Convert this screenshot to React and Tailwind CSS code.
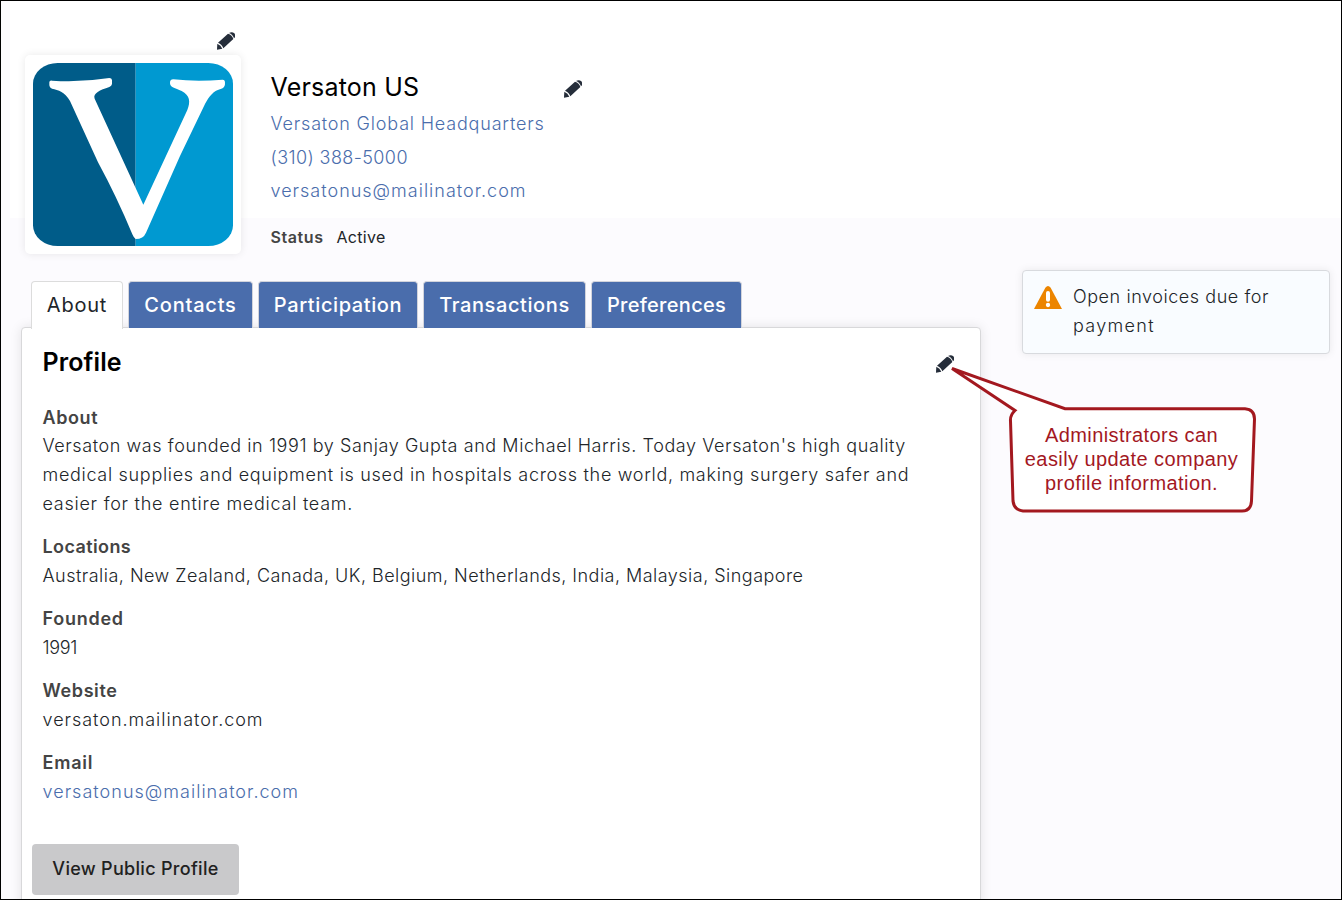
import React from "react";

const tabs = [
  { label: "Contacts", box: "w-[125px]", text: "tracking-[0.8px]" },
  { label: "Participation", box: "w-[160px]", text: "tracking-[0.6px]" },
  { label: "Transactions", box: "w-[163px]", text: "tracking-[0.6px]" },
  { label: "Preferences", box: "w-[151px]", text: "tracking-[0.3px]" },
];

const fields = [
  {
    label: "About",
    labelClass: "tracking-[0.6px]",
    lines: [
      ["Versaton was founded in 1991 by Sanjay Gupta and Michael Harris. Today Versaton's high quality", "tracking-[0.585px]"],
      ["medical supplies and equipment is used in hospitals across the world, making surgery safer and", "tracking-[0.69px]"],
      ["easier for the entire medical team.", "tracking-[0.74px]"],
    ],
  },
  {
    label: "Locations",
    labelClass: "tracking-[0.4px]",
    lines: [["Australia, New Zealand, Canada, UK, Belgium, Netherlands, India, Malaysia, Singapore", "tracking-[0.475px]"]],
  },
  { label: "Founded", labelClass: "tracking-[0.75px]", lines: [["1991", "tracking-[-0.3px]"]] },
  { label: "Website", labelClass: "tracking-[0.6px]", lines: [["versaton.mailinator.com", "tracking-[0.97px]"]] },
  { label: "Email", labelClass: "tracking-[0.8px]", lines: [["versatonus@mailinator.com", "tracking-[1.02px] text-[#4a6dac]"]] },
];

function Pencil({ className }) {
  return (
    <svg viewBox="0 0 54 52" className={`h-[18px] w-[18px] shrink-0 fill-[#252d3a] ${className}`}>
      <path d="M3 31L33 4Q46 8 49 20L19 48Q15 36 3 31Z" />
      <path d="M36 2Q45 -3 52 3Q58 11 51 18Q47 6 36 2Z" />
      <path d="M1 34Q12 38 16 49L0 52Z" />
    </svg>
  );
}

function Logo() {
  return (
    <svg viewBox="99 129 600 549" className="h-[183px] w-[200px]">
      <clipPath id="logo-clip">
        <rect x="99" y="129" width="600" height="549" rx="74" ry="62" />
      </clipPath>
      <g clipPath="url(#logo-clip)">
        <rect x="99" y="129" width="308" height="549" fill="#005c89" />
        <rect x="407" y="129" width="292" height="549" fill="#0099d1" />
      </g>
      <path
        fill="#fff"
        d="M148 187Q148 181 156 182Q240 188 328 174Q335 174 336 180L336 192Q335 198 328 201C300 210 278 220 284 236L430 554L562 270C572 246 570 226 545 213C525 204 510 202 510 190Q509 178 520 178Q590 186 668 179Q675 179 675 188Q676 202 664 206C640 212 628 228 615 252L540 408L438 638Q430 657 407 657Q402 655 397 643Q350 530 294 427L210 243C195 216 175 210 156 206Q148 203 148 196Z"
      />
    </svg>
  );
}

function Warning() {
  return (
    <svg viewBox="0 0 84 69" className="mt-[15px] h-[23px] w-7 shrink-0">
      <path d="M0 69 L34 5 Q42 -5 50 5 L84 69Z" fill="#ec8500" />
      <path d="M42 21v20" stroke="#fff" strokeWidth="12" strokeLinecap="round" />
      <circle cx="42" cy="57" r="6.5" fill="#fff" />
    </svg>
  );
}

function Callout() {
  return (
    <div className="absolute top-[360px] left-[945px] h-[160px] w-[320px]">
      <svg viewBox="946 361 320 160" className="absolute inset-0 h-full w-full">
        <path
          d="M952 368.5L1065 408.7H1245Q1254.500 409.500 1254.500 419L1251.500 501Q1251 511 1242 511H1023Q1014 510 1013 501L1010.500 421Q1010 415 1015 410.500Z"
          fill="#fff"
          stroke="#a3181f"
          strokeWidth="3"
        />
      </svg>
      <p className="absolute top-[62px] left-[65.500px] w-[240px] text-center font-['Liberation_Sans',sans-serif] text-xl/6 whitespace-nowrap text-[#a3181f]">
        <span className="block tracking-[0.42px]">Administrators can</span>
        <span className="block tracking-[0.42px]">easily update company</span>
        <span className="block tracking-[0.42px]">profile information.</span>
      </p>
    </div>
  );
}

export default function App() {
  return (
    <div className="relative h-[900px] w-[1342px] overflow-hidden border border-black bg-[#fcfbfe] font-['Inter',sans-serif] text-lg whitespace-nowrap text-[#212529]">
      <header className="ml-[9px] flex h-[217px] bg-white pl-[15px]">
        <div className="w-[216px] shrink-0 pt-[31px]">
          <Pencil className="ml-[192px]" />
          <div className="mt-[5px] h-[199px] w-[216px] rounded-[5px] bg-white p-2 shadow-[0_0_8px_rgba(0,0,0,0.09)]">
            <Logo />
          </div>
        </div>
        <div className="ml-[29.500px] w-[311px] shrink-0 pt-[68px]">
          <div className="flex h-9 items-center justify-between">
            <h1 className="text-[25px] tracking-[0.2px] text-black">Versaton US</h1>
            <Pencil className="mt-[3px]" />
          </div>
          <div className="mt-0.5 text-lg/[33.400px] font-light text-[#4a6dac]">
            <div className="tracking-[0.81px]">Versaton Global Headquarters</div>
            <div className="pt-px tracking-[0.4px]">(310) 388-5000</div>
            <div className="-mt-px tracking-[1px]">versatonus@mailinator.com</div>
          </div>
          <div className="mt-4 flex gap-[13px] text-base/7">
            <span className="w-[53px] font-semibold tracking-[0.6px] text-[#444]">Status</span>
            <span className="tracking-[0.3px]">Active</span>
          </div>
        </div>
      </header>

      <div className="flex items-start">
        <main className="ml-5 w-[960px] pt-[63px]">
          <nav className="relative z-10 ml-[10px] flex gap-[5px] text-xl">
            <div className="flex h-[48px] w-[92px] items-center justify-center rounded-t-[4px] border border-b-0 border-[#dcdcdc] bg-white pb-px tracking-[0.8px]">About</div>
            {tabs.map((t) => (
              <div key={t.label} className={`flex h-[47px] items-center justify-center rounded-t-[4px] border border-b-0 border-[#d2d4dc] bg-[#4a6dac] font-medium text-white ${t.box}`}>
                <span className={t.text}>{t.label}</span>
              </div>
            ))}
          </nav>
          <section className="-mt-[2px] h-[640px] rounded-[4px] border border-[#d8d8da] bg-white px-5 pt-4 shadow-[0_0_12px_rgba(0,0,0,0.1)]">
            <div className="flex h-9 items-center justify-between pr-[6px]">
              <h2 className="ml-[0.5px] text-[25px] font-semibold tracking-[0.1px] text-black">Profile</h2>
              <Pencil className="mt-1" />
            </div>
            <dl className="mt-[23.600px] ml-[0.5px] flex flex-col gap-[14.400px] text-lg/[28.800px]">
              {fields.map((f) => (
                <div key={f.label}>
                  <dt className="font-semibold text-[#444]">
                    <span className={f.labelClass}>{f.label}</span>
                  </dt>
                  {f.lines.map(([text, cls]) => (
                    <dd key={text} className="font-light">
                      <span className={cls}>{text}</span>
                    </dd>
                  ))}
                </div>
              ))}
            </dl>
            <button className="mt-[37.400px] -ml-2.5 h-[51px] w-[207px] rounded-[4px] bg-[#c9c9cb] pb-0.5 font-medium tracking-[0.3px] text-[#212121]">View Public Profile</button>
          </section>
        </main>

        <aside className="mt-[52px] ml-[41px] flex h-[84px] w-[308px] gap-[11px] rounded-[4px] border border-[#d8dade] bg-[#f9fcff] pl-[11px] shadow-[0_0_8px_rgba(0,0,0,0.08)]">
          <Warning />
          <p className="mt-3 text-lg/[28.800px] font-light">
            <span className="block tracking-[0.56px]">Open invoices due for</span>
            <span className="block tracking-[1.3px]">payment</span>
          </p>
        </aside>
      </div>

      <Callout />
    </div>
  );
}
